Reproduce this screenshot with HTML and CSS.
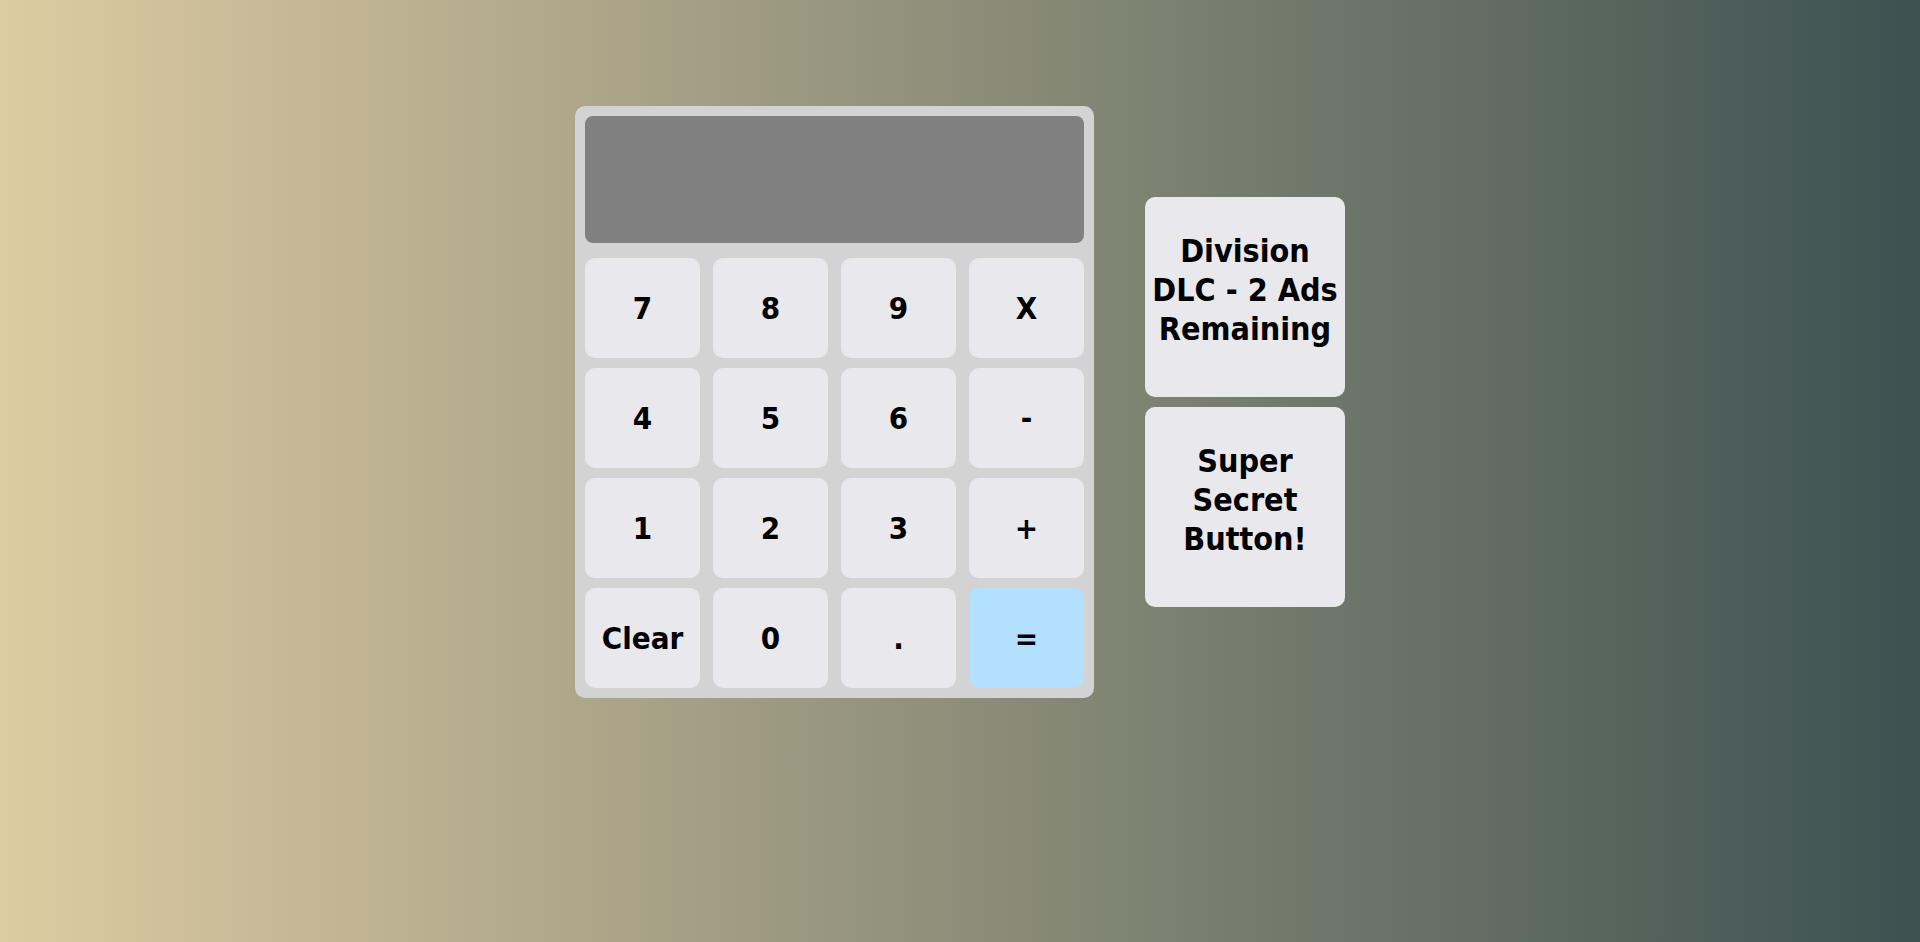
FILE: index.html
```html
<!DOCTYPE html>
<html lang="en">
<head>
<meta charset="utf-8">
<title>Calculator</title>
<link rel="stylesheet" href="styles.css">
</head>
<body>
<div class="page">
  <div class="calculator">
    <div class="display"></div>
    <div class="keys">
      <button class="key">7</button>
      <button class="key">8</button>
      <button class="key">9</button>
      <button class="key">X</button>
      <button class="key">4</button>
      <button class="key">5</button>
      <button class="key">6</button>
      <button class="key">-</button>
      <button class="key">1</button>
      <button class="key">2</button>
      <button class="key">3</button>
      <button class="key">+</button>
      <button class="key">Clear</button>
      <button class="key">0</button>
      <button class="key">.</button>
      <button class="key equals">=</button>
    </div>
  </div>
  <div class="side">
    <button class="side-btn">Division DLC - 2 Ads Remaining</button>
    <button class="side-btn">Super Secret Button!</button>
  </div>
</div>
</body>
</html>
```

FILE: styles.css
```css
html, body {
  margin: 0;
  padding: 0;
}
body {
  width: 1920px;
  height: 942px;
  background: linear-gradient(to right, #decba2, #3d5151);
  font-family: "DejaVu Sans Condensed", "DejaVu Sans", sans-serif;
  font-stretch: condensed;
  overflow: hidden;
}
.page {
  display: flex;
  justify-content: center;
  align-items: center;
  gap: 51px;
  padding-top: 106px;
}
.calculator {
  background: #d3d3d3;
  border-radius: 10px;
  padding: 10px;
  width: 499px;
}
.display {
  height: 127px;
  background: #808080;
  border-radius: 8px;
  margin-bottom: 15px;
}
.keys {
  display: grid;
  grid-template-columns: repeat(4, 115px);
  grid-auto-rows: 100px;
  column-gap: 13px;
  row-gap: 10px;
}
.key, .side-btn {
  border: none;
  margin: 0;
  background: #e9e9ed;
  color: #000;
  font-family: inherit;
  font-stretch: condensed;
  font-weight: bold;
  font-size: 31px;
  border-radius: 10px;
  padding: 0;
}
.equals {
  background: #b3e0fe;
}
.side {
  display: flex;
  flex-direction: column;
  gap: 10px;
}
.side-btn {
  width: 200px;
  height: 200px;
  font-size: 32px;
  line-height: 39px;
  padding: 0 4px 14px;
}
```
